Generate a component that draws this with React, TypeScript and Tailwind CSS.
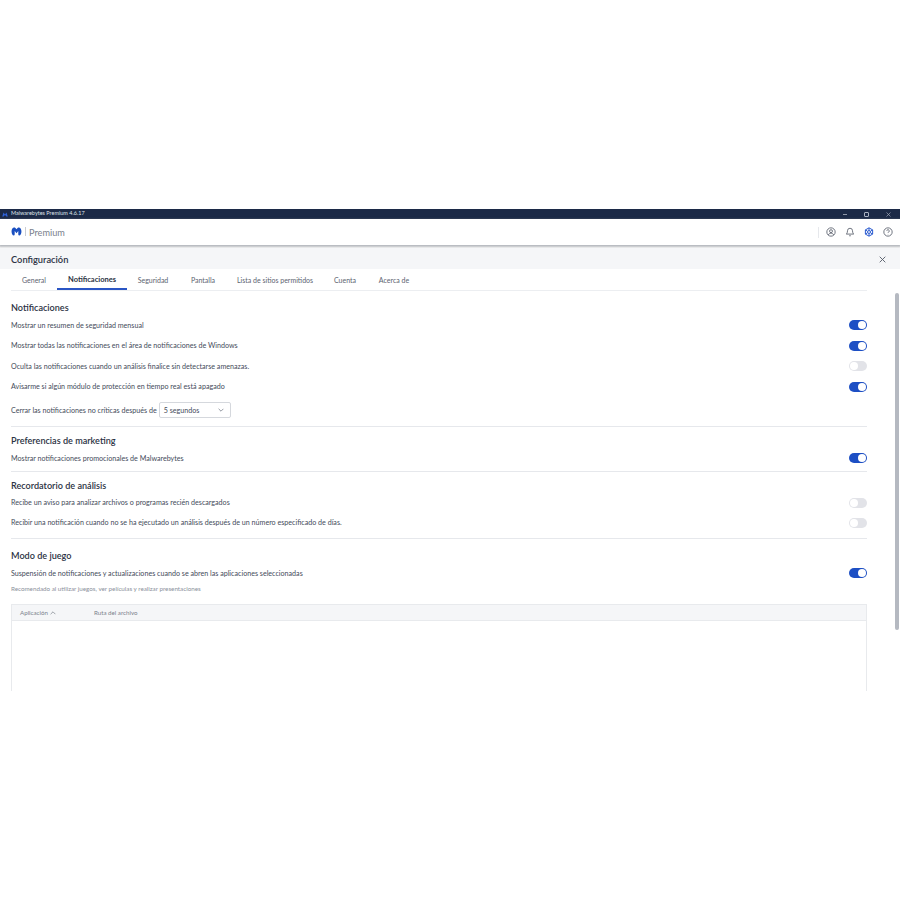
import React from "react";

const F = "font-['Lato','Noto_Sans',sans-serif]";

function Toggle({ on }: { on: boolean }) {
  return (
    <div className={"flex h-[10px] w-[18px] shrink-0 items-center rounded-full px-[1px] " + (on ? "justify-end bg-[#1d4fc4]" : "justify-start bg-[#e2e3e8]")}>
      <div className="h-[8px] w-[8px] rounded-full bg-white" />
    </div>
  );
}

function Row({ text, on, h = "h-[20.5px]" }: { text: string; on: boolean; h?: string }) {
  return (
    <div className={"flex items-center justify-between " + h}>
      <span className="text-[7.13px] leading-none text-[#444b5a]">{text}</span>
      <Toggle on={on} />
    </div>
  );
}

function Heading({ children, cls }: { children: React.ReactNode; cls: string }) {
  return <div className={"text-[9.1px] leading-none font-semibold text-[#2b3243] " + cls}>{children}</div>;
}

const tabs = [
  { t: "General", w: "w-[46px]" },
  { t: "Notificaciones", w: "w-[70px]", active: true },
  { t: "Seguridad", w: "w-[52px]" },
  { t: "Pantalla", w: "w-[48px]" },
  { t: "Lista de sitios permitidos", w: "w-[96px]" },
  { t: "Cuenta", w: "w-[44px]" },
  { t: "Acerca de", w: "w-[54px]" },
];

export default function App() {
  return (
    <div className={"flex h-[900px] w-[900px] flex-col bg-white pt-[209px] " + F}>
      <div className="flex h-[482px] flex-col overflow-hidden">
        {/* Title bar */}
        <div className="flex h-[10px] shrink-0 items-center justify-between bg-[#1c2a47] pr-[9px] pl-[2px]">
          <div className="flex items-center gap-[3px]">
            <svg width="6" height="5" viewBox="0 0 24 20"><path d="M1 18 6 2l6 8 6-8 5 16h-6l-2-6-3 4-3-4-2 6z" fill="#2f62d9" /></svg>
            <span className="text-[5.5px] leading-none text-[#dfe3ea]">Malwarebytes Premium 4.6.17</span>
          </div>
          <div className="flex items-center gap-[17px]">
            <div className="h-[1px] w-[4px] bg-[#8e97a8]" />
            <div className="h-[5px] w-[5px] rounded-[1px] border border-[#aab2c0]" />
            <svg width="5" height="5" viewBox="0 0 10 10" stroke="#aab2c0" strokeWidth="1.3"><path d="M1 1l8 8M9 1l-8 8" /></svg>
          </div>
        </div>

        {/* Header */}
        <div className="flex h-[26px] shrink-0 items-center justify-between pr-[7px] pl-[11px] shadow-[0_1px_2px_1px_rgba(120,125,135,0.55)]">
          <div className="flex items-center">
            <svg width="11" height="9" viewBox="0 0 24 20">
              <path d="M7 1C3 1 1 5 1 10c0 5 2 9 5 9 2 0 2-2 2-5V9l4 5 4-5v5c0 3 0 5 2 5 3 0 5-4 5-9 0-5-2-9-6-9-2 0-3 1-5 4C10 2 9 1 7 1z" fill="#1a4fc0" />
            </svg>
            <div className="mx-[3px] h-[9px] w-px bg-[#c9ccd3]" />
            <span className="pt-[2px] text-[9.2px] leading-none text-[#7b818c]">Premium</span>
          </div>
          <div className="flex items-center gap-[9px]">
            <div className="mr-[-2px] h-[11px] w-px bg-[#e6e8ec]" />
            <svg width="10" height="10" viewBox="0 0 24 24" fill="none" stroke="#555c69" strokeWidth="2"><circle cx="12" cy="12" r="10" /><circle cx="12" cy="10" r="3.5" /><path d="M5.5 19c1.500-3 4-4 6.500-4s5 1 6.500 4" /></svg>
            <svg width="10" height="10" viewBox="0 0 24 24" fill="none" stroke="#555c69" strokeWidth="2"><path d="M6 9a6 6 0 0 1 12 0c0 6 3 8 3 8H3s3-2 3-8" /><path d="M10 21h4" /></svg>
            <svg width="10" height="10" viewBox="0 0 24 24" fill="none" stroke="#2a5bd0" strokeWidth="2.4"><path d="M12 2l8.700 5v10L12 22l-8.700-5V7z" /><circle cx="12" cy="12" r="3.500" /><path d="M12 2v6M12 16v6M3.300 7l5 3M15.700 14l5 3M20.700 7l-5 3M8.300 14l-5 3" /></svg>
            <svg width="10" height="10" viewBox="0 0 24 24" fill="none" stroke="#555c69" strokeWidth="2"><circle cx="12" cy="12" r="10" /><path d="M9 9.500a3 3 0 1 1 4.500 2.600c-1 .6-1.500 1.200-1.500 2.400" /><path d="M12 17.500v.5" /></svg>
          </div>
        </div>

        {/* Configuration bar */}
        <div className="mt-[3px] flex h-[21px] shrink-0 items-center justify-between bg-[#f5f6f8] pt-[2px] pr-[14px] pl-[11px]">
          <span className="text-[9.3px] leading-none font-semibold text-[#2b3243]">Configuración</span>
          <svg width="7" height="7" viewBox="0 0 10 10" stroke="#555c69" strokeWidth="1.300"><path d="M1 1l8 8M9 1l-8 8" /></svg>
        </div>

        {/* Body */}
        <div className="flex min-h-0 flex-1">
          <div className="min-w-0 flex-1 pr-[23px] pl-[11px]">
            {/* Tabs */}
            <div className="flex h-[22px] items-stretch border-b border-[#eceef1]">
              {tabs.map((x) => (
                <div
                  key={x.t}
                  className={"flex items-center justify-center pt-[2px] leading-none " + x.w + (x.active ? " border-b-2 border-[#2a55c4] text-[7.5px] font-bold text-[#2b3243]" : " text-[7px] text-[#5c6370]")}
                >
                  {x.t}
                </div>
              ))}
            </div>

            <Heading cls="mt-[12px] mb-[3px]">Notificaciones</Heading>
            <Row on text="Mostrar un resumen de seguridad mensual" />
            <Row on text="Mostrar todas las notificaciones en el área de notificaciones de Windows" />
            <Row on={false} text="Oculta las notificaciones cuando un análisis finalice sin detectarse amenazas." />
            <Row on text="Avisarme si algún módulo de protección en tiempo real está apagado" />
            <div className="mt-[5px] flex h-[16px] items-center">
              <span className="text-[7.13px] leading-none text-[#444b5a]">Cerrar las notificaciones no críticas después de</span>
              <div className="ml-[2px] flex h-[16px] w-[72px] items-center justify-between rounded-[2px] border border-[#d5d8dd] pr-[6px] pl-[4px]">
                <span className="text-[7.13px] leading-none text-[#444b5a]">5 segundos</span>
                <svg width="6" height="4" viewBox="0 0 10 6" fill="none" stroke="#6d7380" strokeWidth="1.200"><path d="M1 1l4 4 4-4" /></svg>
              </div>
            </div>
            <div className="mt-[8px] h-px bg-[#e6e8ec]" />

            <Heading cls="mt-[9px]">Preferencias de marketing</Heading>
            <Row on text="Mostrar notificaciones promocionales de Malwarebytes" h="mt-[3px] h-[20.5px]" />
            <div className="mt-[2px] h-px bg-[#e6e8ec]" />

            <Heading cls="mt-[9px]">Recordatorio de análisis</Heading>
            <Row on={false} text="Recibe un aviso para analizar archivos o programas recién descargados" h="mt-[3px] h-[20px]" />
            <Row on={false} text="Recibir una notificación cuando no se ha ejecutado un análisis después de un número especificado de días." h="h-[20px]" />
            <div className="mt-[5px] h-px bg-[#e6e8ec]" />

            <Heading cls="mt-[12px]">Modo de juego</Heading>
            <Row on text="Suspensión de notificaciones y actualizaciones cuando se abren las aplicaciones seleccionadas" h="mt-[3px] h-[20.5px]" />
            <div className="mt-[2px] text-[6.25px] leading-[8px] text-[#8a909b]">Recomendado al utilizar juegos, ver películas y realizar presentaciones</div>
            <div className="mt-[11px] h-[120px] border border-[#e8eaed]">
              <div className="flex h-[16px] items-center border-b border-[#e8eaed] bg-[#f5f6f8] pl-[8px] text-[6.2px] leading-none text-[#7b818c]">
                <div className="flex w-[74px] items-center gap-[2px]">
                  <span>Aplicación</span>
                  <svg width="6" height="4" viewBox="0 0 10 6" fill="none" stroke="#7b818c" strokeWidth="1.200"><path d="M1 5l4-4 4 4" /></svg>
                </div>
                <span>Ruta del archivo</span>
              </div>
            </div>
          </div>
          {/* Scrollbar */}
          <div className="w-[10px] shrink-0 pt-[24px] pl-[5px]">
            <div className="h-[337px] w-[4px] rounded-full bg-[#b5b9c1]" />
          </div>
        </div>
      </div>
    </div>
  );
}
